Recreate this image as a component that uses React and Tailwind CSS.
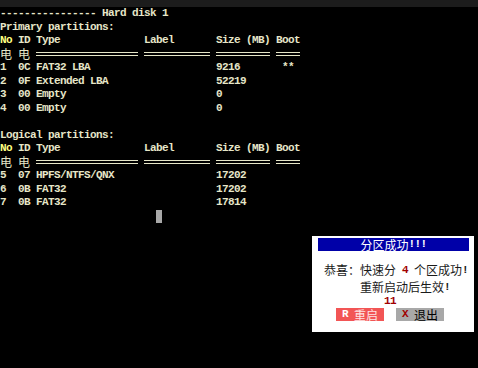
import React from "react";

const mono = "font-['Liberation_Mono','DejaVu_Sans_Mono',monospace] font-bold text-[11px] tracking-[-0.6px]";
const cjk = "font-['Noto_Sans_CJK_SC',sans-serif]";

function Line({ children, className = "" }) {
  return (
    <div className={`h-[13.5px] leading-[13.5px] whitespace-pre ${className}`}>{children}</div>
  );
}

function Header() {
  return (
    <Line>
      <span className="text-[#ffff80]">No</span>
      {" ID Type" + " ".repeat(14) + "Label" + " ".repeat(7) + "Size (MB) Boot"}
    </Line>
  );
}

function DoubleRule({ w }) {
  return <span className={`inline-block h-[4px] border-y border-[#e6e6c8] ${w}`} />;
}

function RuleRow() {
  return (
    <div className="h-[13.5px] flex items-center">
      <span className={`${cjk} text-[12px] w-[12px] leading-none text-center font-normal tracking-normal`}>电</span>
      <span className="w-[6px]" />
      <span className={`${cjk} text-[12px] w-[12px] leading-none text-center font-normal tracking-normal`}>电</span>
      <span className="w-[6px]" />
      <DoubleRule w="w-[102px]" />
      <span className="w-[6px]" />
      <DoubleRule w="w-[66px]" />
      <span className="w-[6px]" />
      <DoubleRule w="w-[54px]" />
      <span className="w-[6px]" />
      <DoubleRule w="w-[24px]" />
    </div>
  );
}

function Row({ no, id, type, size, boot = "" }) {
  return <Line>{no.padEnd(3) + id.padEnd(3) + type.padEnd(30) + size.padEnd(11) + boot}</Line>;
}

export default function App() {
  return (
    <div className="relative w-[478px] h-[368px] bg-black overflow-hidden">
      <div className="h-[7px] bg-[#1c1c1c]" />
      <div className={`${mono} text-[#e6e6c8]`}>
        <Line>{"-".repeat(16) + " Hard disk 1"}</Line>
        <Line>Primary partitions:</Line>
        <Header />
        <RuleRow />
        <Row no="1" id="0C" type="FAT32 LBA" size="9216" boot="**" />
        <Row no="2" id="0F" type="Extended LBA" size="52219" />
        <Row no="3" id="00" type="Empty" size="0" />
        <Row no="4" id="00" type="Empty" size="0" />
        <Line> </Line>
        <Line>Logical partitions:</Line>
        <Header />
        <RuleRow />
        <Row no="5" id="07" type="HPFS/NTFS/QNX" size="17202" />
        <Row no="6" id="0B" type="FAT32" size="17202" />
        <Row no="7" id="0B" type="FAT32" size="17814" />
        <div className="h-[13.5px] flex">
          <span className="ml-[156px] w-[6px] h-[13px] bg-[#a8a8a8]" />
        </div>
      </div>

      <div className="absolute left-[312px] top-[236px] w-[162px] h-[96px] bg-white">
        <div className="mt-[2px] ml-[6px] mr-[5px] h-[13px] bg-[#0000a8] flex items-center justify-center text-white">
          <span className={`${cjk} text-[12px] leading-none`}>分区成功</span>
          <span className={`${mono} leading-none`}>!!!</span>
        </div>
        <div className="mt-[11px] h-[16px] flex items-center pl-[12px] text-[#1a1a1a] whitespace-pre">
          <span className={`${cjk} text-[12px] leading-none`}>恭喜：快速分</span>
          <span className={`${mono} text-[#a00000]`}>{" 4 "}</span>
          <span className={`${cjk} text-[12px] leading-none`}>个区成功</span>
          <span className={`${mono}`}>!</span>
        </div>
        <div className="mt-[1px] h-[16px] flex items-center pl-[48px] text-[#1a1a1a]">
          <span className={`${cjk} text-[12px] leading-none`}>重新启动后生效</span>
          <span className={`${mono}`}>!</span>
        </div>
        <div className={`h-[12px] flex items-center pl-[72px] ${mono} text-[#a00000]`}>11</div>
        <div className="mt-[1px] flex pl-[24px] gap-[12px] whitespace-pre">
          <div className="w-[48px] h-[13px] bg-[#f25555] flex items-center">
            <span className={`${mono} text-white pl-[6px]`}>{"R "}</span>
            <span className={`${cjk} text-[12px] leading-none text-[#ffe4e4]`}>重启</span>
          </div>
          <div className="w-[48px] h-[13px] bg-[#a8a8a8] flex items-center">
            <span className={`${mono} text-[#a00000] pl-[6px]`}>{"X "}</span>
            <span className={`${cjk} text-[12px] leading-none text-black`}>退出</span>
          </div>
        </div>
      </div>
    </div>
  );
}
